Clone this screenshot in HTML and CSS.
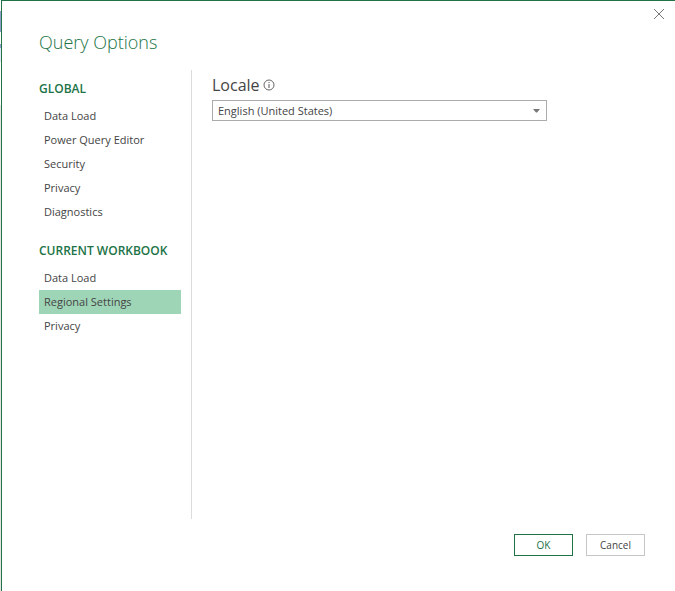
FILE: index.html
```html
<!DOCTYPE html>
<html lang="en">
<head>
<meta charset="utf-8">
<title>Query Options</title>
<link rel="stylesheet" href="styles.css">
</head>
<body>
<main class="dialog" role="dialog" aria-labelledby="dialog-title">
  <button class="close" type="button" aria-label="Close">
    <svg width="12" height="12" viewBox="0 0 12 12" aria-hidden="true"><path d="M1 1l10 10M11 1L1 11" stroke="#777" stroke-width="1" fill="none"/></svg>
  </button>
  <h1 class="title" id="dialog-title">Query Options</h1>
  <div class="body">
    <nav class="sidebar">
      <section class="group">
        <h2 class="group-title">GLOBAL</h2>
        <ul class="items">
          <li><a class="item" href="#">Data Load</a></li>
          <li><a class="item" href="#">Power Query Editor</a></li>
          <li><a class="item" href="#">Security</a></li>
          <li><a class="item" href="#">Privacy</a></li>
          <li><a class="item" href="#">Diagnostics</a></li>
        </ul>
      </section>
      <section class="group">
        <h2 class="group-title">CURRENT WORKBOOK</h2>
        <ul class="items">
          <li><a class="item" href="#">Data Load</a></li>
          <li><a class="item selected" href="#" aria-current="page">Regional Settings</a></li>
          <li><a class="item" href="#">Privacy</a></li>
        </ul>
      </section>
    </nav>
    <section class="content">
      <div class="field-head">
        <label class="field-label" for="locale">Locale</label>
        <svg width="12" height="12" viewBox="0 0 12 12" aria-hidden="true"><circle cx="6" cy="6" r="5" fill="none" stroke="#666" stroke-width="1"/><path d="M6 5v4M6 3v1" stroke="#555" stroke-width="1"/></svg>
      </div>
      <div class="select-wrap">
        <select class="select" id="locale"><option>English (United States)</option></select>
        <svg class="arrow" width="7" height="4" viewBox="0 0 7 4" aria-hidden="true"><path d="M0 0h7L4 3.500H3z" fill="#777"/></svg>
      </div>
    </section>
  </div>
  <footer class="actions">
    <button class="button primary" type="button">OK</button>
    <button class="button" type="button">Cancel</button>
  </footer>
</main>
</body>
</html>
```
FILE: styles.css
```css
* {
  box-sizing: border-box;
}

body {
  margin: 0;
  padding-left: 1px;
  color: #444;
  font: 11px/24px "Segoe UI", "Open Sans", "Noto Sans", sans-serif;
  background: linear-gradient(#fff 11px, #8f9fc9 11px 32px, #fff 32px 44px, #8f9fc9 44px 48px, #dfe8f4 48px 62px, #fff 62px 105px, #e4e4e4 105px);
}

.dialog {
  position: relative;
  display: flex;
  flex-direction: column;
  min-height: 100vh;
  padding: 28px 30px 35px 37px;
  border: solid #217346;
  border-width: 1px 0 0 1px;
  background: #fff;
}

.close {
  position: absolute;
  top: 7px;
  right: 10px;
  display: flex;
  padding: 0;
  border: 0;
  background: none;
}

.title {
  margin: 0 0 15px;
  color: #217346;
  font-size: 18px;
  font-weight: 300;
  line-height: 26px;
}

.body {
  display: flex;
  flex: 1;
  gap: 20px;
}

.sidebar {
  display: flex;
  flex: 0 0 153px;
  flex-direction: column;
  gap: 15px;
  padding: 7px 10px 0 0;
  border-right: 1px solid #dcdcdc;
}

.group-title {
  margin: 0 0 3px;
  color: #217346;
  font-size: 12px;
  font-weight: 600;
  white-space: nowrap;
}

.items {
  margin: 0;
  padding: 0;
  list-style: none;
}

.item {
  display: block;
  padding-left: 5px;
  color: inherit;
  text-decoration: none;
}

.selected {
  background: #9fd5b7;
}

.content {
  flex: 1;
  padding-top: 3px;
}

.field-head {
  display: flex;
  align-items: center;
  gap: 3px;
  margin-bottom: 3px;
}

.field-label {
  font-size: 16px;
}

.select-wrap {
  display: grid;
  align-items: center;
  max-width: 335px;
}

.select {
  grid-area: 1 / 1;
  width: 100%;
  height: 21px;
  padding: 0 20px 0 5px;
  appearance: none;
  border: 1px solid #ababab;
  border-radius: 0;
  background: #fff;
  color: #444;
  font: inherit;
  line-height: 19px;
}

.arrow {
  grid-area: 1 / 1;
  justify-self: end;
  margin-right: 7px;
  pointer-events: none;
}

.actions {
  display: flex;
  justify-content: flex-end;
  gap: 13px;
  padding-top: 15px;
}

.button {
  width: 59px;
  height: 22px;
  padding: 0;
  border: 1px solid #c6c6c6;
  background: #fff;
  color: #444;
  font: inherit;
  font-size: 10px;
  line-height: 20px;
}

.primary {
  border-color: #217346;
  color: #217346;
}
```
